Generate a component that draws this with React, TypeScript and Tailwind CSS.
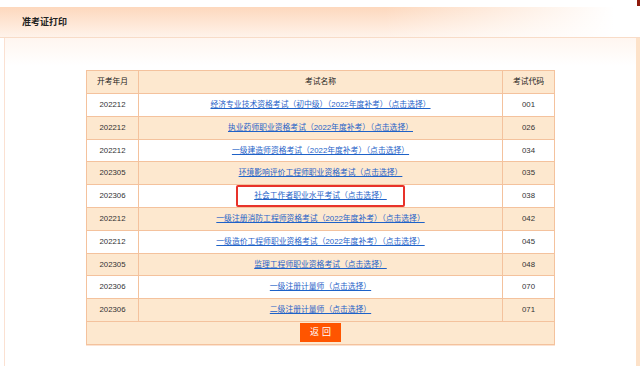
import React from 'react'

const ROWS = [
  { date: '202212', name: '经济专业技术资格考试（初中级）（2022年度补考）（点击选择）', code: '001' },
  { date: '202212', name: '执业药师职业资格考试（2022年度补考）（点击选择）', code: '026' },
  { date: '202212', name: '一级建造师资格考试（2022年度补考）（点击选择）', code: '034' },
  { date: '202305', name: '环境影响评价工程师职业资格考试（点击选择）', code: '035' },
  { date: '202306', name: '社会工作者职业水平考试（点击选择）', code: '038', mark: true },
  { date: '202212', name: '一级注册消防工程师资格考试（2022年度补考）（点击选择）', code: '042' },
  { date: '202212', name: '一级造价工程师职业资格考试（2022年度补考）（点击选择）', code: '045' },
  { date: '202305', name: '监理工程师职业资格考试（点击选择）', code: '048' },
  { date: '202306', name: '一级注册计量师（点击选择）', code: '070' },
  { date: '202306', name: '二级注册计量师（点击选择）', code: '071' },
]

// 准考证打印 — 考试列表
export default function App() {
  return (
    <div
      className="relative h-[366px] w-[640px] overflow-hidden bg-white text-[#333]"
      style={{ fontFamily: '"Liberation Sans", "Noto Sans CJK SC", sans-serif' }}
    >
      {/* 右侧滚动条残影 */}
      <div className="absolute right-0 top-0 h-[6px] w-[3px] bg-[#8e1a0c]" />

      <div className="pt-[7px]">
        {/* 标题栏 */}
        <div className="relative h-[31px] border-b border-[#f8dcc8] bg-[linear-gradient(to_bottom,#fdd8bd,#fff3ea)]">
          <div className="absolute inset-0 bg-[linear-gradient(to_right,rgba(255,255,255,0)_0%,rgba(255,255,255,0)_60%,#ffffff_96%)]" />
          <h1 className="relative pl-[22px] pt-[9px] text-[9px] font-bold leading-[12px] text-[#222]">准考证打印</h1>
        </div>

        {/* 内容面板 */}
        <div className="ml-[4px] h-[328px] border-l border-r-4 border-l-[#fbe1d2] border-r-[#fde2c9] bg-[linear-gradient(to_bottom,#fff6f0,#ffffff_28px)] pt-[32px]">
          <table className="mx-auto w-[469px] border-collapse border border-[#f4c29d] text-center text-[7.8px] leading-none shadow-[0_1px_0_#fbe3d2]">
            <thead>
              <tr className="h-[23px] bg-[#fde8cf]">
                <th className="w-[52px] border border-[#f4c29d] font-normal text-[#222]">开考年月</th>
                <th className="border border-[#f4c29d] font-normal text-[#222]">考试名称</th>
                <th className="w-[52px] border border-[#f4c29d] font-normal text-[#222]">考试代码</th>
              </tr>
            </thead>
            <tbody>
              {ROWS.map((r, i) => (
                <tr key={r.code} className={i % 2 === 0 ? 'h-[22.8px] bg-white' : 'h-[22.8px] bg-[#fde8cf]'}>
                  <td className="border border-[#f4c29d]">{r.date}</td>
                  <td className="border border-[#f4c29d]">
                    {r.mark ? (
                      <span className="inline-block rounded-[2px] border-2 border-[#e8322a] px-[16px] py-[5px]">
                        <a href="#" className="text-[#1e62c8] underline">{r.name}</a>
                      </span>
                    ) : (
                      <a href="#" className="text-[#1e62c8] underline">{r.name}</a>
                    )}
                  </td>
                  <td className="border border-[#f4c29d]">{r.code}</td>
                </tr>
              ))}
              <tr className="h-[23px] bg-[#fde8cf]">
                <td colSpan={3} className="border border-[#f4c29d]">
                  <button className="h-[19px] w-[41px] bg-[#ff5500] pl-[3px] text-[9px] tracking-[3px] text-white">返回</button>
                </td>
              </tr>
            </tbody>
          </table>
        </div>
      </div>
    </div>
  )
}
